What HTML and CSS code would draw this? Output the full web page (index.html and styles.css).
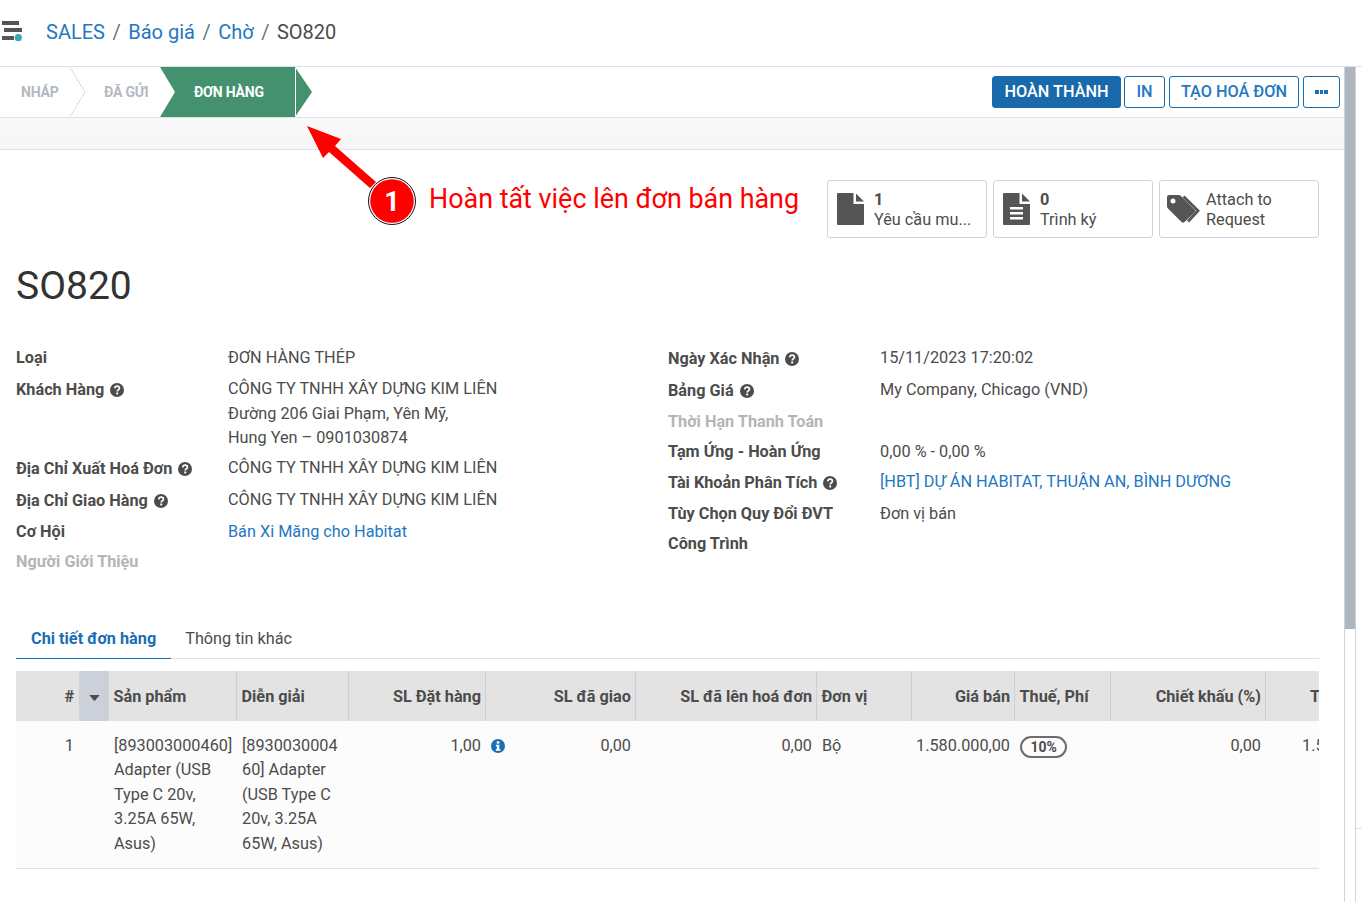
FILE: index.html
```html
<!DOCTYPE html>
<html lang="vi">
<head>
<meta charset="utf-8">
<title>SO820</title>
<link rel="stylesheet" href="styles.css">
</head>
<body>
<svg class="defs" width="0" height="0" aria-hidden="true">
  <symbol id="help" viewBox="0 0 14 14">
    <circle cx="7" cy="7" r="7" fill="#4c4c4c"/>
    <path d="M4.7 5.4C4.9 4 5.9 3.2 7.1 3.2c1.3 0 2.3.9 2.3 2 0 1.6-2.2 1.7-2.2 3.2" fill="none" stroke="#fff" stroke-width="1.7"/>
    <rect x="6.2" y="9.5" width="2" height="1.9" fill="#fff"/>
  </symbol>
</svg>
<div class="app">
  <header class="topbar">
    <svg class="logo" width="24" height="24" viewBox="0 0 24 24">
      <rect x="2" y="1" width="17" height="4" fill="#555"/>
      <rect x="4" y="8" width="18" height="4" fill="#555"/>
      <rect x="2" y="16" width="12" height="4" fill="#555"/>
      <circle cx="18.3" cy="17.7" r="3.6" fill="#3aa9b0"/>
    </svg>
    <nav class="crumbs">
      <a class="crumb-link">SALES</a><span class="crumb-sep">/</span>
      <a class="crumb-link">Báo giá</a><span class="crumb-sep">/</span>
      <a class="crumb-link">Chờ</a><span class="crumb-sep">/</span>
      <span class="crumb-current">SO820</span>
    </nav>
  </header>
  <div class="work">
    <main class="main">
      <div class="statusbar">
        <div class="stages">
          <span class="stage stage-first">NHÁP</span>
          <span class="stage stage-second">ĐÃ GỬI</span>
          <span class="stage stage-active">ĐƠN HÀNG</span>
        </div>
        <div class="actions">
          <button class="btn btn-primary">HOÀN THÀNH</button>
          <button class="btn btn-in">IN</button>
          <button class="btn btn-invoice">TẠO HOÁ ĐƠN</button>
          <button class="btn btn-more" aria-label="Thêm"><i class="dot"></i><i class="dot"></i><i class="dot"></i></button>
        </div>
      </div>
      <div class="band"></div>
      <section class="sheet">
        <div class="stats">
          <div class="stat">
            <svg class="stat-icon" width="27" height="32" viewBox="0 0 27 32">
              <path d="M1 0H16.5V11H27V31Q27 32 26 32H1Q0 32 0 31V1Q0 0 1 0Z" fill="#555"/>
              <path d="M19 0.5L27 8.5H19Z" fill="#555"/>
            </svg>
            <div class="stat-text"><b class="stat-num">1</b><span class="stat-name">Yêu cầu mu...</span></div>
          </div>
          <div class="stat">
            <svg class="stat-icon" width="27" height="32" viewBox="0 0 27 32">
              <path d="M1 0H16.5V11H27V31Q27 32 26 32H1Q0 32 0 31V1Q0 0 1 0Z" fill="#555"/>
              <path d="M19 0.5L27 8.5H19Z" fill="#555"/>
              <path d="M7 14h13v2.4H7zM7 19h13v2.4H7zM7 24h13v2.4H7z" fill="#fff"/>
            </svg>
            <div class="stat-text"><b class="stat-num">0</b><span class="stat-name">Trình ký</span></div>
          </div>
          <div class="stat">
            <svg class="stat-icon stat-icon-tag" width="33" height="28" viewBox="0 0 33 28">
              <path fill-rule="evenodd" d="M2 0H11.5Q13 0 14 1L27.500 14.500Q29 16 27.500 17.500L17.500 27Q16 28.500 14.500 27L1 13.500Q0 12.500 0 11V2Q0 0 2 0ZM6 3.500A2.500 2.500 0 1 0 6 8.500A2.500 2.500 0 1 0 6 3.500Z" fill="#555"/>
              <path d="M16.500 1.500L31 15.800L21 26.500" fill="none" stroke="#555" stroke-width="2.800"/>
            </svg>
            <div class="stat-text stat-text-plain"><span class="stat-name">Attach to</span><span class="stat-name">Request</span></div>
          </div>
        </div>
        <h1 class="title">SO820</h1>
        <div class="form">
          <div class="form-col">
            <div class="row row-loose"><span class="label">Loại</span><span class="value">ĐƠN HÀNG THÉP</span></div>
            <div class="row"><span class="label label-help">Khách Hàng <svg class="help"><use href="#help"/></svg></span><span class="value">CÔNG TY TNHH XÂY DỰNG KIM LIÊN<br>Đường 206 Giai Phạm, Yên Mỹ,<br>Hung Yen – 0901030874</span></div>
            <div class="row row-help"><span class="label label-help">Địa Chỉ Xuất Hoá Đơn <svg class="help"><use href="#help"/></svg></span><span class="value">CÔNG TY TNHH XÂY DỰNG KIM LIÊN</span></div>
            <div class="row row-help"><span class="label label-help">Địa Chỉ Giao Hàng <svg class="help"><use href="#help"/></svg></span><span class="value">CÔNG TY TNHH XÂY DỰNG KIM LIÊN</span></div>
            <div class="row"><span class="label">Cơ Hội</span><a class="value value-link">Bán Xi Măng cho Habitat</a></div>
            <div class="row"><span class="label label-muted">Người Giới Thiệu</span><span class="value"></span></div>
          </div>
          <div class="form-col">
            <div class="row row-help"><span class="label label-help">Ngày Xác Nhận <svg class="help"><use href="#help"/></svg></span><span class="value">15/11/2023 17:20:02</span></div>
            <div class="row row-help"><span class="label label-help">Bảng Giá <svg class="help"><use href="#help"/></svg></span><span class="value">My Company, Chicago (VND)</span></div>
            <div class="row"><span class="label label-muted">Thời Hạn Thanh Toán</span><span class="value"></span></div>
            <div class="row"><span class="label">Tạm Ứng - Hoàn Ứng</span><span class="value">0,00 % - 0,00 %</span></div>
            <div class="row row-help"><span class="label label-help">Tài Khoản Phân Tích <svg class="help"><use href="#help"/></svg></span><a class="value value-link">[HBT] DỰ ÁN HABITAT, THUẬN AN, BÌNH DƯƠNG</a></div>
            <div class="row"><span class="label">Tùy Chọn Quy Đổi ĐVT</span><span class="value">Đơn vị bán</span></div>
            <div class="row"><span class="label">Công Trình</span><span class="value"></span></div>
          </div>
        </div>
        <div class="tabs">
          <a class="tab tab-active">Chi tiết đơn hàng</a>
          <a class="tab">Thông tin khác</a>
        </div>
        <div class="table-wrap">
          <table class="lines">
            <colgroup>
              <col class="c-num"><col class="c-handle"><col class="c-prod"><col class="c-desc"><col class="c-qty"><col class="c-deliv"><col class="c-inv"><col class="c-uom"><col class="c-price"><col class="c-tax"><col class="c-disc"><col class="c-total">
            </colgroup>
            <thead>
              <tr>
                <th class="num">#</th>
                <th class="handle"><svg class="caret" width="11" height="6" viewBox="0 0 12 7"><path d="M0.500 0H11.500Q12 0 11.600 0.600L6.500 6.600Q6 7 5.500 6.600L0.400 0.600Q0 0 0.500 0Z" fill="#4c4c4c"/></svg></th>
                <th>Sản phẩm</th>
                <th>Diễn giải</th>
                <th class="num">SL Đặt hàng</th>
                <th class="num">SL đã giao</th>
                <th class="num">SL đã lên hoá đơn</th>
                <th>Đơn vị</th>
                <th class="num">Giá bán</th>
                <th>Thuế, Phí</th>
                <th class="num">Chiết khấu (%)</th>
                <th class="clip-h">Thành tiền</th>
              </tr>
            </thead>
            <tbody>
              <tr>
                <td class="num">1</td>
                <td></td>
                <td class="cell-prod">[893003000460] Adapter (USB Type C 20v, 3.25A 65W, Asus)</td>
                <td>[893003000460] Adapter (USB Type C 20v, 3.25A 65W, Asus)</td>
                <td class="num">1,00</td>
                <td class="num"><svg class="info" width="14" height="14" viewBox="0 0 14 14"><circle cx="7" cy="7" r="7" fill="#1a6eb5"/><rect x="5.800" y="2.300" width="2.600" height="2.300" fill="#fff"/><path d="M4.900 5.700H8.300V10H9.300V11.700H4.900V10H5.900V7.400H4.900Z" fill="#fff"/></svg>0,00</td>
                <td class="num">0,00</td>
                <td>Bộ</td>
                <td class="num cell-price">1.580.000,00</td>
                <td><span class="badge">10%</span></td>
                <td class="num">0,00</td>
                <td class="clip-v">1.580.000,00</td>
              </tr>
            </tbody>
          </table>
        </div>
      </section>
    </main>
    <div class="gutter"><div class="thumb"></div></div>
    <div class="edge"><div class="edge-box"></div></div>
  </div>
  <svg class="note-arrow" width="120" height="110" viewBox="300 120 120 110">
    <polygon points="307,126 341,139 335,146 376,182 370,188 329,152 323,158" fill="#ff0000"/>
    <circle cx="392" cy="201" r="23.500" fill="#fff" stroke="#111" stroke-width="1"/>
    <circle cx="392" cy="201" r="21.800" fill="#ff0000"/>
    <text class="note-num" x="392" y="211" text-anchor="middle">1</text>
  </svg>
  <div class="note-text">Hoàn tất việc lên đơn bán hàng</div>
</div>
</body>
</html>
```
FILE: styles.css
```css
* { box-sizing: border-box; }
html, body { margin: 0; height: 100%; background: #fff; overflow: hidden; }
body { font-family: Roboto, "Noto Sans", sans-serif; font-size: 16.25px; color: #4c4c4c; }
.defs { position: absolute; }
.app { position: relative; width: 1362px; height: 902px; display: flex; flex-direction: column; }

.topbar { height: 67px; flex: none; display: flex; align-items: center; padding-bottom: 2px; border-bottom: 1px solid #dee2e6; }
.logo { margin-left: 0; flex: none; }
.crumbs { margin-left: 22px; display: flex; align-items: center; font-size: 20px; line-height: 26px; }
.crumb-link { color: #1f78c1; }
.crumb-sep { color: #6c757d; margin: 0 7.5px; }
.crumb-current { color: #4c4c4c; }

.work { flex: 1; display: flex; min-height: 0; }
.main { width: 1344px; flex: none; }
.gutter { width: 12px; flex: none; border-left: 1px solid #ced4da; border-right: 1px solid #ced4da; }
.thumb { height: 562px; background: #adb5bd; }
.edge { flex: 1; }
.edge-box { margin-top: 761px; height: 74px; border-top: 1px solid #dee2e6; }

.statusbar { height: 51px; display: flex; justify-content: space-between; border-bottom: 1px solid #dee2e6; }
.stages { display: flex; height: 50px; font-size: 14px; font-weight: 700; letter-spacing: -0.2px; }
.stage { display: flex; align-items: center; position: relative; color: #b3b9c1; }
.stage-first { width: 70px; padding-left: 21px; }
.stage-second { width: 90px; padding-left: 34px; }
.stage-first::after {
  content: ""; position: absolute; right: -15px; top: 0; width: 15px; height: 50px;
  background: linear-gradient(to top right, transparent 48%, #dee2e6 48%, #dee2e6 52%, transparent 52%) top / 100% 50% no-repeat,
              linear-gradient(to bottom right, transparent 48%, #dee2e6 48%, #dee2e6 52%, transparent 52%) bottom / 100% 50% no-repeat;
}
.stage-active {
  width: 152px; padding-left: 34px; color: #fff; background: #449170;
  clip-path: polygon(0 0, 135px 0, 152px 50%, 135px 100%, 0 100%, 15px 50%);
}
.stage-active::after { content: ""; position: absolute; left: 135px; top: 0; width: 1px; height: 50px; background: #fff; }

.actions { display: flex; gap: 3px; padding: 9px 4px 0 0; align-items: flex-start; }
.btn {
  height: 32px; border: 1px solid #1a6aab; border-radius: 3px; background: #fff; color: #1f78c1;
  font: 500 16.25px/1 Roboto, sans-serif; padding: 0; display: flex; align-items: center; justify-content: center;
}
.btn-primary { width: 129px; background: #1a6aab; color: #fff; }
.btn-in { width: 41px; }
.btn-invoice { width: 130px; margin: 0 1px; }
.btn-more { width: 37px; gap: 1px; }
.dot { width: 3.5px; height: 3.5px; background: #1f6fb2; }

.band { height: 32px; background: linear-gradient(#f9f9f9, #f6f6f6); border-bottom: 1px solid #dee2e6; }

.sheet { padding: 30px 25px 0 16px; }
.stats { display: flex; justify-content: flex-end; gap: 6px; }
.stat {
  width: 160px; height: 58px; border: 1px solid #ced4da; border-radius: 3px;
  display: flex; align-items: center; padding-left: 9px; line-height: 20px;
}
.stat-icon-tag { margin-left: -2px; margin-right: 6px; }
.stat-icon { flex: none; }
.stat-text { margin: 2px 0 0 10px; display: flex; flex-direction: column; }
.stat-text-plain { margin-left: 0; }
.stat-num { font-weight: 700; }
.title { margin: 24px 0 0; font-size: 39px; line-height: 48px; font-weight: 400; color: #333; }

.form { margin-top: 36px; display: flex; height: 272px; }
.form-col { width: 652px; flex: none; }
.row { display: flex; padding-bottom: 5.5px; line-height: 24.5px; }
.row-loose { padding-bottom: 6.5px; }
.row-help { padding-bottom: 7.5px; }
.label { width: 212px; flex: none; font-weight: 700; }
.label-help { padding-top: 1px; margin-bottom: -1px; }
.label-muted { color: #b5b5b5; }
.help { width: 14px; height: 14px; margin-left: 2px; vertical-align: -1.5px; }
.value-link { color: #1f78c1; }

.tabs { display: flex; height: 41px; border-bottom: 1px solid #dee2e6; line-height: 42px; }
.tab { padding: 0 15px; height: 41px; }
.tab-active { color: #1a6eb5; font-weight: 700; border-bottom: 1px solid #1a6eb5; }
.tab + .tab { padding-left: 14px; }

.table-wrap { margin-top: 12px; overflow: hidden; width: 1303px; }
.lines { table-layout: fixed; border-collapse: separate; border-spacing: 0; width: 1400px; }
.c-num { width: 63px; } .c-handle { width: 30px; } .c-prod { width: 128px; } .c-desc { width: 112px; }
.c-qty { width: 137px; } .c-deliv { width: 150px; } .c-inv { width: 181px; } .c-uom { width: 95px; }
.c-price { width: 103px; } .c-tax { width: 96px; } .c-disc { width: 155px; } .c-total { width: 150px; }
th { height: 50px; background: #e3e3e3; font-weight: 700; text-align: left; padding: 0 4px 0 4.5px; border-right: 1px solid #cfcfcf; white-space: nowrap; overflow: hidden; }
th:first-child, th.handle { border-right: 0; }
th:first-child { padding-right: 5px; }
th.handle { background: #ccd1d9; text-align: center; padding: 0; }
td { background: #fcfcfc; padding: 12.5px 5px 11.5px 5px; vertical-align: top; line-height: 24.5px; overflow-wrap: anywhere; border-bottom: 1px solid #dee2e6; }
.cell-prod { padding-right: 2px; overflow-wrap: normal; }
.cell-price { padding-left: 0; white-space: nowrap; }
.num { text-align: right; }
.caret { vertical-align: 1px; }
.info { float: left; margin: 5px 0 0 0; }
.badge { display: inline-block; height: 22px; margin-top: 2px; padding: 0 8.5px; border: 2px solid #6c6c6c; border-radius: 11px; font-size: 14px; font-weight: 700; line-height: 18px; vertical-align: top; }
.clip-h { padding-left: 44px; }
.clip-v { padding-left: 36px; white-space: nowrap; }

.note-arrow { position: absolute; left: 300px; top: 120px; }
.note-num { font: 700 27px Roboto, sans-serif; fill: #fff; }
.note-text { position: absolute; left: 429px; top: 181px; font-size: 26.9px; line-height: 36px; color: #ff0000; white-space: nowrap; }
```
